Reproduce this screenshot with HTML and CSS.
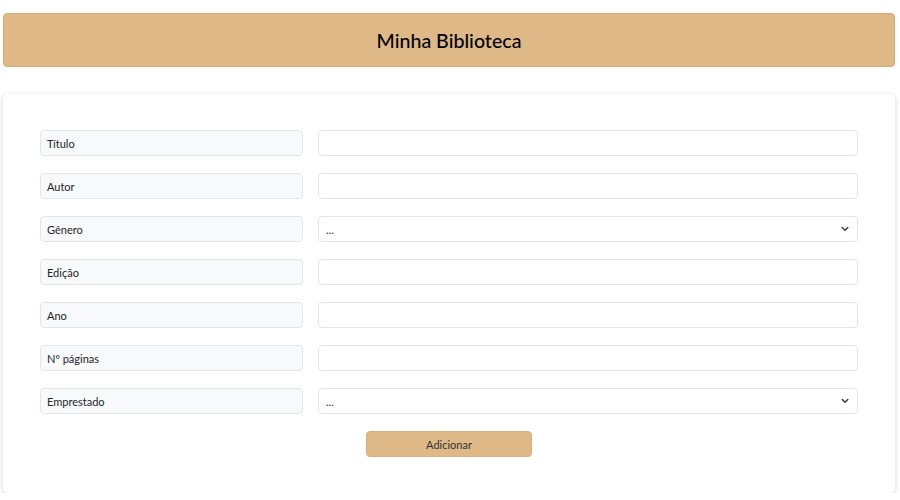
FILE: index.html
```html
<!DOCTYPE html>
<html lang="pt">
<head>
<meta charset="utf-8">
<title>Minha Biblioteca</title>
<link rel="stylesheet" href="styles.css">
</head>
<body>
<header class="topbar"><h1 class="title">Minha Biblioteca</h1></header>
<main class="card">
  <form class="form">
    <div class="row"><span class="label">Título</span><input class="field" type="text"></div>
    <div class="row"><span class="label">Autor</span><input class="field" type="text"></div>
    <div class="row"><span class="label">Gênero</span><div class="field select"><span>...</span><svg class="chev" width="8" height="6" viewBox="0 0 8 6"><path d="M1.2 1.5 L4 4.3 L6.8 1.5" fill="none" stroke="#343a40" stroke-width="1.4" stroke-linecap="round" stroke-linejoin="round"/></svg></div></div>
    <div class="row"><span class="label">Edição</span><input class="field" type="text"></div>
    <div class="row"><span class="label">Ano</span><input class="field" type="text"></div>
    <div class="row"><span class="label">Nº páginas</span><input class="field" type="text"></div>
    <div class="row"><span class="label">Emprestado</span><div class="field select"><span>...</span><svg class="chev" width="8" height="6" viewBox="0 0 8 6"><path d="M1.2 1.5 L4 4.3 L6.8 1.5" fill="none" stroke="#343a40" stroke-width="1.4" stroke-linecap="round" stroke-linejoin="round"/></svg></div></div>
    <div class="actions"><button class="btn" type="button">Adicionar</button></div>
  </form>
</main>
</body>
</html>
```
FILE: styles.css
```css
* { box-sizing: border-box; }
html, body { background: #fff; }
body {
  margin: 0;
  padding: 13px 5px 0 3px;
  font-family: Lato, "Open Sans", sans-serif;
  color: #212529;
}
.topbar {
  height: 54px;
  background: #deb887;
  border: 1px solid #d4ab76;
  border-radius: 4px;
  display: flex;
  align-items: center;
  justify-content: center;
}
.title {
  margin: 0;
  font-size: 19.6px;
  font-weight: 500;
  color: #000;
}
.card {
  margin-top: 27px;
  background: #fff;
  border-radius: 5px;
  box-shadow: 0 1px 5px rgba(0,0,0,0.18);
  padding: 36px 37px 36px 37px;
}
.form { display: flex; flex-direction: column; gap: 17px; }
.row { display: flex; gap: 15px; }
.label {
  width: 263px;
  flex: none;
  height: 26px;
  background: #f8f9fa;
  border: 1px solid #e3e6e9;
  border-radius: 4px;
  padding: 0 6px;
  display: flex;
  align-items: center;
  font-size: 11px;
  color: #212529;
}
.field {
  flex: 1;
  height: 26px;
  background: #fff;
  border: 1px solid #e2e5e8;
  border-radius: 4px;
  font: inherit;
  font-size: 11px;
  padding: 0 7px;
}
.select {
  display: flex;
  align-items: center;
  justify-content: space-between;
  padding: 0 8px 0 7px;
}
.chev { display: block; }
.actions { display: flex; justify-content: center; margin-top: 0; }
.btn {
  width: 166px;
  height: 26px;
  background: #deb887;
  border: 1px solid #d8b07c;
  border-radius: 4px;
  font-family: inherit;
  font-size: 11px;
  color: #333;
}
```
